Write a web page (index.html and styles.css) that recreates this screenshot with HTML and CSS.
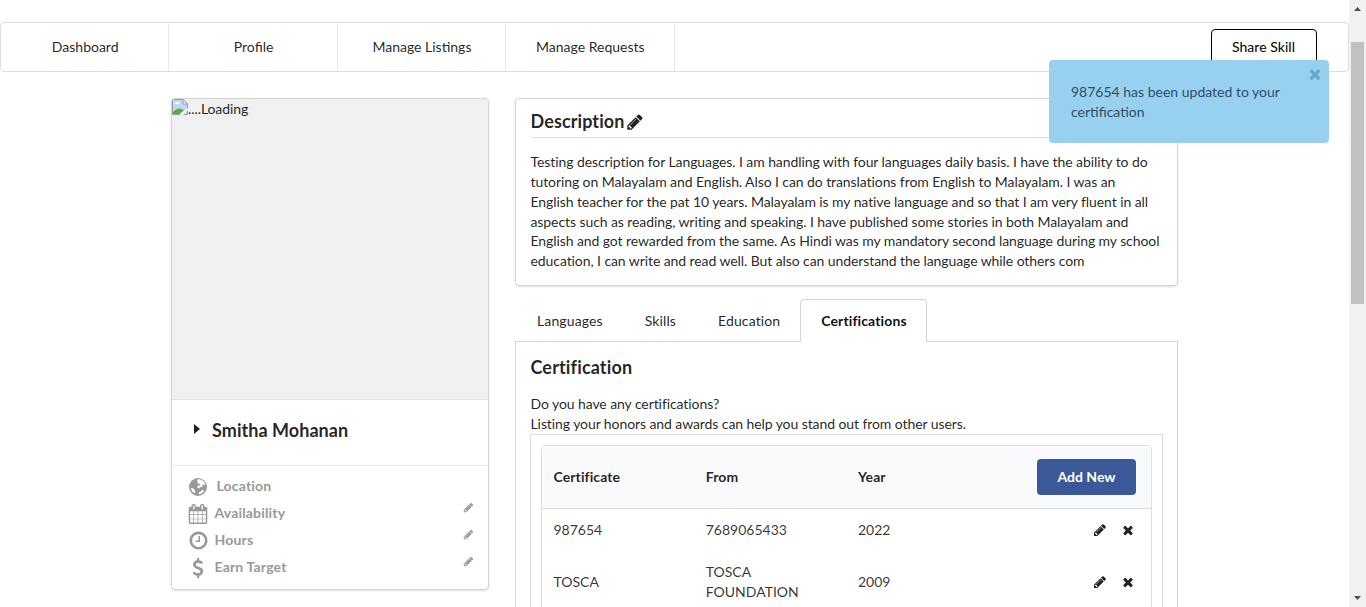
FILE: index.html
```
<!DOCTYPE html>
<html lang="en">
<head>
<meta charset="utf-8">
<title>Profile</title>
<link rel="stylesheet" href="styles.css">
</head>
<body>
<svg class="defs" aria-hidden="true">
<symbol id="pencil" viewBox="0 0 1792 1792"><path d="M491 1536l91-91-235-235-91 91v107h128v128h107zm523-928q0-22-22-22-10 0-17 7l-542 542q-7 7-7 17 0 22 22 22 10 0 17-7l542-542q7-7 7-17zm-54-192l416 416-832 832h-416v-416zm683 96q0 53-37 90l-166 166-416-416 166-165q36-38 90-38 53 0 91 38l235 234q37 39 37 91z"/></symbol>
<symbol id="times" viewBox="0 0 1792 1792"><path d="M1490 1322q0 40-28 68l-136 136q-28 28-68 28t-68-28l-294-294-294 294q-28 28-68 28t-68-28l-136-136q-28-28-28-68t28-68l294-294-294-294q-28-28-28-68t28-68l136-136q28-28 68-28t68 28l294 294 294-294q28-28 68-28t68 28l136 136q28 28 28 68t-28 68l-294 294 294 294q28 28 28 68z"/></symbol>
<symbol id="calendar" viewBox="0 0 1792 1792"><path d="M192 1664h288v-288h-288v288zm352 0h320v-288h-320v288zm-352-352h288v-320h-288v320zm352 0h320v-320h-320v320zm-352-384h288v-288h-288v288zm736 736h320v-288h-320v288zm-384-736h320v-288h-320v288zm768 736h288v-288h-288v288zm-384-352h320v-320h-320v320zm-352-864v-288q0-13-9.500-22.500t-22.500-9.500h-64q-13 0-22.500 9.500t-9.500 22.500v288q0 13 9.500 22.500t22.500 9.500h64q13 0 22.500-9.500t9.500-22.500zm736 864h288v-320h-288v320zm-384-384h320v-288h-320v288zm384 0h288v-288h-288v288zm32-480v-288q0-13-9.500-22.500t-22.500-9.500h-64q-13 0-22.500 9.500t-9.500 22.500v288q0 13 9.500 22.500t22.500 9.500h64q13 0 22.500-9.500t9.500-22.500zm384-64v1280q0 52-38 90t-90 38h-1408q-52 0-90-38t-38-90v-1280q0-52 38-90t90-38h128v-96q0-66 47-113t113-47h64q66 0 113 47t47 113v96h384v-96q0-66 47-113t113-47h64q66 0 113 47t47 113v96h128q52 0 90 38t38 90z"/></symbol>
<symbol id="clock" viewBox="0 0 1792 1792"><path d="M1024 544v448q0 14-9 23t-23 9h-320q-14 0-23-9t-9-23v-64q0-14 9-23t23-9h224v-352q0-14 9-23t23-9h64q14 0 23 9t9 23zm416 352q0-148-73-273t-198-198-273-73-273 73-198 198-73 273 73 273 198 198 273 73 273-73 198-198 73-273zm224 0q0 209-103 385.500t-279.500 279.500-385.500 103-385.500-103-279.500-279.500-103-385.500 103-385.500 279.500-279.500 385.500-103 385.500 103 279.500 279.500 103 385.500z"/></symbol>
<symbol id="dollar" viewBox="0 0 1792 1792"><path d="M1362 1185q0 153-99.500 263.500t-258.500 136.500v175q0 14-9 23t-23 9h-135q-13 0-22.500-9.500t-9.500-22.500v-175q-66-9-127.500-31t-101.500-44.500-74-48-46.500-37.500-17.500-18q-17-21-2-41l103-135q7-10 23-12 15-2 24 9l2 2q113 99 243 125 37 8 74 8 81 0 142.500-43t61.500-122q0-28-15-53t-33.500-42-58.500-37.500-66-32-80-32.500q-39-16-61.500-25t-61.500-26.500-62.500-31-56.500-35.500-53.500-42.500-43.500-49-35.500-58-21-66.500-8.500-78q0-138 98-242t255-134v-180q0-13 9.500-22.500t22.500-9.500h135q14 0 23 9t9 23v176q57 6 110.500 23t87 33.500 63.500 37.500 39 29 15 14q17 18 5 38l-81 146q-8 15-23 16-14 3-27-7-3-3-14.500-12t-39-26.500-58.500-32-74.500-26-85.500-11.500q-95 0-155 43t-60 111q0 26 8.500 48t29.500 41.500 39.500 33 56 31 60.500 27 70 27.500q53 20 81 31.500t76 35 75.500 42.500 62 50 53 63.500 31.500 76.500 13 94z"/></symbol>
<symbol id="globe" viewBox="0 0 18 18"><circle cx="9" cy="9" r="9"/><path fill="#fff" d="M8.300 1.600l2.400-.3 2.300.8 2.200 1.900 1.300 2.600-.9.600-1.200-.7-1 .5.500 1.300-1.500 1-1.400-.3-.8 1.300-1.500-.4-.4-1.200 1.200-1.200 1.700-.4-.5-1.700-1.500.5-.9-.9 1-1.100-1.500-.7zM2 10l1.700.3 1.800 1.300.7 1.600-.6 2-1.700-.9-1.300-1.900zM10 14.200l2.200-1.300 1.200-1.200 1.700.7-1 1.800-1.900 1.500-2.300.7z"/></symbol>
</svg>
<div class="screen">
<div class="page">
  <nav class="menu">
    <a class="menu-item">Dashboard</a><a class="menu-item">Profile</a><a class="menu-item">Manage Listings</a><a class="menu-item">Manage Requests</a>
    <a class="share">Share Skill</a>
  </nav>
  <main class="columns">
    <aside class="card">
      <div class="photo"><svg class="broken" viewBox="0 0 16 16"><path d="M.5.500h10.500l4.500 4.500v10.500H.500z" fill="#c4d5f5" stroke="#999"/><path d="M2 5q1-2 2.500-1.500 2-1.500 3.500 1.500z" fill="#fff"/><path d="M1 15v-2q4-5 8-3l3 1-5 4z" fill="#55ad3c"/><path d="M11 .5v4.500h4.500z" fill="#fff" stroke="#999"/><path d="M8 16l8-7v2l-5 5z" fill="#fff"/></svg><span>....Loading</span></div>
      <div class="name"><svg class="caret" viewBox="0 0 6 10"><path d="M0 0l6 5-6 5z"/></svg><span>Smitha Mohanan</span></div>
      <ul class="facts">
        <li><svg class="fact-icon"><use href="#globe"/></svg><span class="location">Location</span></li>
        <li><svg class="fact-icon wide"><use href="#calendar"/></svg><span>Availability</span><svg class="edit"><use href="#pencil"/></svg></li>
        <li><svg class="fact-icon full"><use href="#clock"/></svg><span>Hours</span><svg class="edit"><use href="#pencil"/></svg></li>
        <li><svg class="fact-icon wide"><use href="#dollar"/></svg><span>Earn Target</span><svg class="edit"><use href="#pencil"/></svg></li>
      </ul>
    </aside>
    <div class="content">
      <section class="description">
        <h3 class="title">Description<svg class="title-edit"><use href="#pencil"/></svg></h3>
        <p class="about">Testing description for Languages. I am handling with four languages daily basis. I have the ability to do<br>tutoring on Malayalam and English. Also I can do translations from English to Malayalam. I was an<br>English teacher for the pat 10 years. Malayalam is my native language and so that I am very fluent in all<br>aspects such as reading, writing and speaking. I have published some stories in both Malayalam and<br>English and got rewarded from the same. As Hindi was my mandatory second language during my school<br>education, I can write and read well. But also can understand the language while others com</p>
      </section>
      <div class="tabs"><a class="tab">Languages</a><a class="tab">Skills</a><a class="tab">Education</a><a class="tab active">Certifications</a></div>
      <section class="certification">
        <h3 class="subtitle">Certification</h3>
        <p class="hint">Do you have any certifications?<br>Listing your honors and awards can help you stand out from other users.</p>
        <div class="frame">
          <div class="table">
            <div class="row head"><span>Certificate</span><span>From</span><span>Year</span><span class="actions"><button class="add">Add New</button></span></div>
            <div class="row"><span>987654</span><span>7689065433</span><span>2022</span><span class="actions"><svg><use href="#pencil"/></svg><svg><use href="#times"/></svg></span></div>
            <div class="row tall"><span>TOSCA</span><span>TOSCA<br>FOUNDATION</span><span>2009</span><span class="actions"><svg><use href="#pencil"/></svg><svg><use href="#times"/></svg></span></div>
          </div>
        </div>
      </section>
    </div>
  </main>
</div>
<div class="scrollbar"><svg class="arrow" viewBox="0 0 7 4"><path d="M0 4L3.500 0 7 4z"/></svg><div class="thumb"></div><svg class="arrow down" viewBox="0 0 7 4"><path d="M0 0l3.500 4L7 0z"/></svg></div>
</div>
<div class="toast">987654 has been updated to your certification<svg class="close"><use href="#times"/></svg></div>
</body>
</html>
```
FILE: styles.css
```
* { box-sizing: border-box; }
body { margin: 0; background: #fff; color: rgba(0,0,0,.87); font: 14px/20px Lato, "Liberation Sans", sans-serif; overflow: hidden; }
svg { fill: currentColor; flex: none; }
.defs { position: absolute; width: 0; height: 0; }
.screen { display: flex; height: 607px; overflow: hidden; }
.page { flex: 1; padding-top: 22px; overflow: hidden; }
.menu { display: flex; height: 50px; border: 1px solid #dededf; border-radius: 4px; }
.menu-item { width: 12.5%; padding-left: 1px; border-right: 1px solid #e8e8e9; display: flex; align-items: center; justify-content: center; }
.share { margin: 6px 31px 6px auto; width: 106px; height: 36px; border: 1px solid #000; border-radius: 4px; color: #000; text-align: center; line-height: 34px; letter-spacing: .05px; padding-right: 1px; }
.columns { display: flex; gap: 26px; width: 1007px; margin: 26px 0 0 171px; align-items: flex-start; }
.card { flex: none; width: 318px; height: 492px; border: 1px solid #d4d4d5; border-radius: 4px; box-shadow: 0 1px 2px rgba(34,36,38,.15); overflow: hidden; }
.photo { height: 300px; background: #f0f0f0; display: flex; letter-spacing: -.08px; }
.broken { width: 16px; height: 16px; }
.name { height: 67px; border-top: 1px solid #e2e2e3; border-bottom: 1px solid #eeeeef; display: flex; align-items: center; padding: 0 0 5px 22px; font-size: 18px; font-weight: 700; letter-spacing: .05px; }
.caret { width: 6px; height: 10px; margin: -2px 12px 0 0; }
.facts { list-style: none; margin: 0; padding: 6px 14px 0 16px; color: #999; font-weight: 700; letter-spacing: .17px; }
.facts li { height: 27px; display: flex; align-items: center; }
.fact-icon { width: 18px; height: 18px; margin: 2px 8px 0 1px; }
.fact-icon.wide { width: 20px; height: 20px; margin: 2px 6.500px 0 0; }
.fact-icon.full { width: 21px; height: 21px; margin: 2px 5.500px 0 0; }
.location { margin-left: 1.500px; }
.edit { width: 11px; height: 11px; margin: 0 0 10px auto; }
.content { flex: 1; min-width: 0; }
.description { height: 188px; padding: 9px 14.500px 0; border: 1px solid #d4d4d5; border-radius: 4px; box-shadow: 0 1px 2px rgba(34,36,38,.15); }
.title { margin: 0 0 14px; height: 30px; border-bottom: 1px solid #dededf; padding-top: 3px; font-size: 18px; line-height: 20px; letter-spacing: .1px; display: flex; }
.title-edit { width: 18px; height: 18px; margin: 2px 0 0 1px; }
.about { margin: 0; line-height: 19.85px; letter-spacing: -.085px; white-space: nowrap; }
.tabs { display: flex; height: 43px; margin: 13px 0 -1px; letter-spacing: .12px; }
.tab { height: 43px; padding: 12px 20px 0 22px; }
.tab.active { position: relative; padding: 11px 19.500px 0 20px; border: 1px solid #d4d4d5; border-bottom: 0; border-radius: 4px 4px 0 0; background: #fff; font-weight: 700; color: rgba(0,0,0,.95); }
.certification { border: 1px solid #d4d4d5; padding: 14px 14px; height: 350px; }
.subtitle { margin: 0 0 15px; font-size: 18px; line-height: 23px; letter-spacing: .15px; padding-left: .5px; }
.hint { margin: 0; letter-spacing: -.085px; padding-left: .5px; }
.frame { border: 1px solid #dededf; padding: 10px; height: 250px; }
.table { border: 1px solid #dededf; border-radius: 4px; height: 230px; overflow: hidden; }
.row { display: grid; grid-template-columns: repeat(4, 1fr); align-items: center; height: 42px; color: rgba(0,0,0,.8); }
.row > span { padding: 0 11.500px; }
.row.head { height: 63px; border-bottom: 1px solid #dededf; background: #f9fafb; font-weight: 700; color: rgba(0,0,0,.87); letter-spacing: .1px; }
.row.tall { height: 62px; }
.row > .actions { display: flex; justify-content: flex-end; gap: 14px; padding-right: 16px; color: rgba(0,0,0,.87); }
.actions svg { width: 14px; height: 14px; }
.head .add { margin-right: -1px; width: 99px; height: 36px; padding: 0 6px 2px; border: 0; border-radius: 4px; background: #3b5998; color: #fff; font: 700 14px Lato, sans-serif; }
.scrollbar { width: 17px; background: #f1f1f1; color: #505050; display: flex; flex-direction: column; align-items: center; }
.arrow { width: 7px; height: 4px; margin: 7px 0 31px; }
.thumb { width: 13px; height: 262px; background: #c1c1c1; }
.arrow.down { margin: auto 0 7px; }
.toast { position: absolute; left: 1049px; top: 60px; width: 280px; height: 83px; padding: 22px 40px 0 22px; border-radius: 4px; background: #98d1f0; color: #2f4d66; }
.close { position: absolute; right: 6px; top: 6px; width: 16px; height: 16px; color: #68a8cc; }
```
